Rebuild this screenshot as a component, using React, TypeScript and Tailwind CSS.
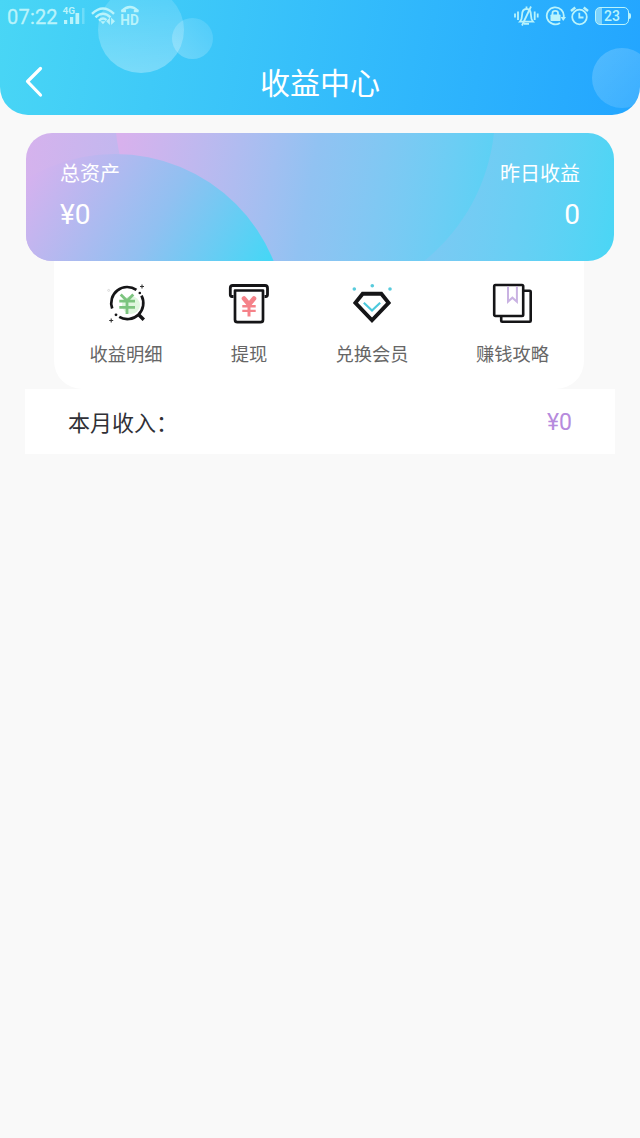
/**
 * App.tsx - 收益中心
 */

import type { ReactNode } from 'react';

interface MenuItem {
  label: string;
  icon: ReactNode;
  className: string;
}

function StatusBar() {
  return (
    <div className="relative flex h-8 items-center justify-between pl-[7px] pr-[9px] text-[#b9f3fb]">
      <div className="flex items-center">
        <span className="w-[55px] whitespace-nowrap pt-px font-[Roboto] text-[20px] leading-8 tracking-[0.2px] [-webkit-text-stroke:0.3px]">07:22</span>
        <svg width="24" height="20" viewBox="0 0 24 20" fill="currentColor">
          <text x="0.5" y="8" fontSize="8.5" fontWeight="700" fontFamily="Roboto, sans-serif" textLength="12.5" lengthAdjust="spacingAndGlyphs">4G</text>
          <rect x="2" y="14" width="3.2" height="4" />
          <rect x="8" y="11" width="3.2" height="7" />
          <rect x="13.5" y="7" width="3.7" height="11" />
          <rect x="20" y="2" width="2.5" height="16" opacity="0.35" />
        </svg>
        <svg className="ml-[5px]" width="26" height="20" viewBox="0 0 26 20" fill="none" stroke="currentColor" strokeWidth="2.4">
          <path d="M1 7.8 Q12 -2.8 23 7.8" />
          <path d="M4.5 11.4 Q12 4 19.5 11.4" />
          <path d="M8 14.6 Q12 10.8 15.5 14.2" />
          <path d="M9.3 15.3 L12 18.3 L14.5 15.3 Z" fill="currentColor" stroke="none" />
          <path d="M18.9 11.5 L15.2 15.2 L18.9 19 Z M20.1 11.5 L24 15.2 L20.1 19 Z" fill="currentColor" stroke="none" />
        </svg>
        <svg className="ml-[3px]" width="22" height="28" viewBox="0 -4 22 28" fill="none" stroke="currentColor">
          <path d="M1.8 5 Q10 -2.8 18 5" strokeWidth="2.4" />
          <path d="M1.2 5 H6 M13.8 5 H18.6" strokeWidth="2.4" />
          <text x="0.3" y="18.6" fontSize="15" fontWeight="700" fontFamily="Roboto, sans-serif" fill="currentColor" stroke="none" textLength="18.5" lengthAdjust="spacingAndGlyphs">HD</text>
        </svg>
      </div>

      <div className="flex items-center">
        <svg width="25" height="22" viewBox="0 0 25 22" fill="none" stroke="currentColor" strokeWidth="1.8">
          <path d="M1 8.5 V12.5 M4 6.5 V15 M20.7 6.5 V15 M23.7 8.5 V12.5" />
          <path d="M6 16.7 Q8 14.5 8 10.5 Q8 4 12.5 4 Q17 4 17 10.5 Q17 14.5 19 16.7 Z M12.5 1.5 V4 M10 18.8 H15" />
          <path d="M17 1.5 L8 20.5" />
        </svg>
        <svg className="ml-[6px]" width="21" height="20" viewBox="0 0 21 20" fill="none" stroke="currentColor" strokeWidth="1.8">
          <path d="M15 16.9 A8.5 8.5 0 1 1 18.7 11" />
          <path d="M15.7 11 H21 L18.2 15 Z" fill="currentColor" stroke="none" />
          <rect x="5.5" y="8.5" width="10" height="6.5" rx="0.8" fill="currentColor" stroke="none" />
          <path d="M7.5 9 V7 Q7.5 4.8 10.3 4.8 Q13 4.8 13 7 V9" />
        </svg>
        <svg className="ml-[4px]" width="19" height="20" viewBox="0 0 19 20" fill="none" stroke="currentColor" strokeWidth="1.8">
          <circle cx="9.5" cy="11" r="7.3" />
          <path d="M9.3 6.8 V11.5 H13.5" />
          <path d="M1 5 L5.3 1.5 M18 5 L13.7 1.5" strokeWidth="2.4" />
        </svg>
        <div className="ml-[6px] flex h-[18px] w-[34px] items-center justify-center rounded-[5px] border-[1.5px] border-[#b9f3fb] bg-linear-to-r from-[#7dd2fc] from-20% to-transparent to-20% font-[Roboto] text-[14px] font-medium leading-none">
          23
        </div>
        <div className="h-[6px] w-[2px] rounded-r-sm bg-[#b9f3fb]" />
      </div>
    </div>
  );
}

function DetailIcon() {
  return (
    <svg width="44" height="44" viewBox="0 0 44 44" fill="none">
      <circle cx="27" cy="23" r="9" fill="#e0f6df" />
      <path d="M32.4 7.9 A16 16 0 0 0 8.2 26.5" stroke="#151517" strokeWidth="2.7" />
      <path d="M37.5 13.7 A16 16 0 0 1 15.2 34.9" stroke="#151517" strokeWidth="2.7" />
      <path d="M34.5 32.5 L39.8 37.8" stroke="#151517" strokeWidth="3.4" />
      <circle cx="35.8" cy="11" r="1.3" fill="#151517" />
      <circle cx="12" cy="32.8" r="1.4" fill="#151517" />
      <path d="M16.7 12.5 L23 18.7 L29.3 12.5 M15.3 19.2 H31 M15.3 25.3 H31 M23 18.5 V32" stroke="#7cc47f" strokeWidth="2.8" />
      <path d="M38 2.5 V6.5 M36 4.5 H40 M7.2 36.5 V40.5 M5.2 38.5 H9.2" stroke="#333" strokeWidth="1.1" />
      <circle cx="4.7" cy="8.4" r="1" stroke="#ccc" strokeWidth="0.7" />
    </svg>
  );
}

function WithdrawIcon() {
  return (
    <svg width="44" height="44" viewBox="0 0 44 44" fill="none" strokeLinejoin="round">
      <path d="M6.5 14.5 H5 Q3.3 14.5 3.3 12.5 V6 Q3.3 3.5 5.8 3.5 H38 Q40.5 3.5 40.5 6 V12.5 Q40.5 14.5 38.8 14.5 H37.5" stroke="#151517" strokeWidth="2.8" />
      <path d="M8 8.5 H36 V37.7 Q36 40.2 33.5 40.2 H10.5 Q8 40.2 8 37.7 Z" fill="#fff" stroke="#151517" strokeWidth="2.7" />
      <path d="M17 16.5 L22 22.5 L27 16.5" stroke="#f58289" strokeWidth="4.6" strokeLinecap="round" />
      <path d="M15.3 24.2 H28.7 M15.3 28.9 H28.7" stroke="#f58289" strokeWidth="2.4" />
      <path d="M22 22 V34.5" stroke="#f58289" strokeWidth="3" />
    </svg>
  );
}

function MemberIcon() {
  return (
    <svg width="44" height="44" viewBox="0 0 44 44" fill="none">
      <path d="M12.7 11.7 H31.3 L38.6 20.9 L22 38.3 L5.4 20.9 Z" stroke="#151517" strokeWidth="3.9" />
      <path d="M13.8 20.8 L22 28.5 L30.2 20.8" stroke="#4cc9dd" strokeWidth="2.2" />
      <circle cx="4.3" cy="7" r="1.8" fill="#58cbdc" />
      <circle cx="22.3" cy="3.7" r="1.8" fill="#58cbdc" />
      <circle cx="40" cy="7" r="1.8" fill="#58cbdc" />
    </svg>
  );
}

function GuideIcon() {
  return (
    <svg width="44" height="44" viewBox="0 0 44 44" fill="none" strokeLinejoin="round">
      <rect x="10.2" y="8.8" width="29.5" height="31" rx="1" stroke="#151517" strokeWidth="2.6" />
      <rect x="3.2" y="3" width="29" height="31" rx="1.2" fill="#fff" stroke="#151517" strokeWidth="2.6" />
      <path d="M17 4.4 V19.7 L21.4 15.7 L25.9 19.7 V4.4" stroke="#c9b2e2" strokeWidth="2" strokeLinejoin="miter" />
    </svg>
  );
}

const menuItems: MenuItem[] = [
  { label: '收益明细', icon: <DetailIcon />, className: 'w-[144px]' },
  { label: '提现', icon: <WithdrawIcon />, className: 'w-[102px]' },
  { label: '兑换会员', icon: <MemberIcon />, className: 'w-[144px]' },
  { label: '赚钱攻略', icon: <GuideIcon />, className: 'w-[137px]' },
];

export default function App() {
  return (
    <div className="min-h-[1138px] w-[640px] bg-[#f9f9f9] font-[Roboto,'Noto_Sans_CJK_SC',sans-serif]">
      {/* 顶部导航 */}
      <header className="relative h-[115px] overflow-hidden rounded-b-[28px] bg-linear-100 from-[#49d6f5] to-[#23a5ff] text-white">
        <div className="absolute -top-[13px] left-[98px] size-[86px] rounded-full bg-linear-to-b from-white/10 to-white/30" />
        <div className="absolute left-[172px] top-[18px] size-[41px] rounded-full bg-linear-to-bl from-white/10 to-white/25" />
        <div className="absolute left-[592px] top-[48px] size-[60px] rounded-full bg-linear-to-br from-white/20 to-white/10" />
        <StatusBar />
        <div className="relative flex h-[83px] items-start justify-center pt-[30px]">
          <svg className="absolute left-[24px] top-[33px]" width="20" height="34" viewBox="0 0 20 34" fill="none" stroke="currentColor" strokeWidth="3.2" strokeLinecap="round" strokeLinejoin="round">
            <path d="M16.5 3.5 L3.5 16.5 L16.5 30" />
          </svg>
          <h1 className="text-[30px] leading-[43px]">收益中心</h1>
        </div>
      </header>

      <main className="px-[26px] pt-[18px]">
        {/* 资产卡片 */}
        <section className="relative h-[128px] overflow-hidden rounded-[26px] bg-linear-100 from-[#d6b2ed] via-[#90c1f2] via-50% to-[#49d6f5] text-white">
          <div className="absolute -top-[210px] left-[89px] size-[380px] rounded-full bg-linear-100 from-[#d8b1ed] from-10% via-[#91c2f2] via-54% to-[#50d3f5]" />
          <div className="absolute -left-[82px] top-[21px] size-[342px] rounded-full bg-linear-[120deg] from-[#dcb0ee] from-15% via-[#91c0f1] via-47% to-[#45d7f6] to-72%" />
          <div className="relative flex justify-between px-[34px] pt-[26px]">
            <div>
              <p className="text-[20px] leading-[30px]">总资产</p>
              <p className="mt-[8px] text-[28px] leading-[36px]">¥0</p>
            </div>
            <div className="text-right">
              <p className="text-[20px] leading-[30px]">昨日收益</p>
              <p className="mt-[8px] text-[28px] leading-[36px]">0</p>
            </div>
          </div>
        </section>

        {/* 功能入口 */}
        <nav className="ml-[28px] mr-[30px] flex h-[128px] rounded-b-[28px] bg-white pt-[21px]">
          {menuItems.map((item) => (
            <div key={item.label} className={`flex shrink-0 flex-col items-center ${item.className}`}>
              {item.icon}
              <span className="mt-[15px] whitespace-nowrap text-[18.3px] leading-[28px] text-[#666]">{item.label}</span>
            </div>
          ))}
        </nav>

        {/* 本月收入 */}
        <section className="-mx-px flex h-[65px] items-center justify-between bg-white pl-[43px] pr-[43px] pt-[3px]">
          <span className="text-[22px] text-[#303036]">本月收入：</span>
          <span className="text-[23px] text-[#b68bdd]">¥0</span>
        </section>
      </main>
    </div>
  );
}
